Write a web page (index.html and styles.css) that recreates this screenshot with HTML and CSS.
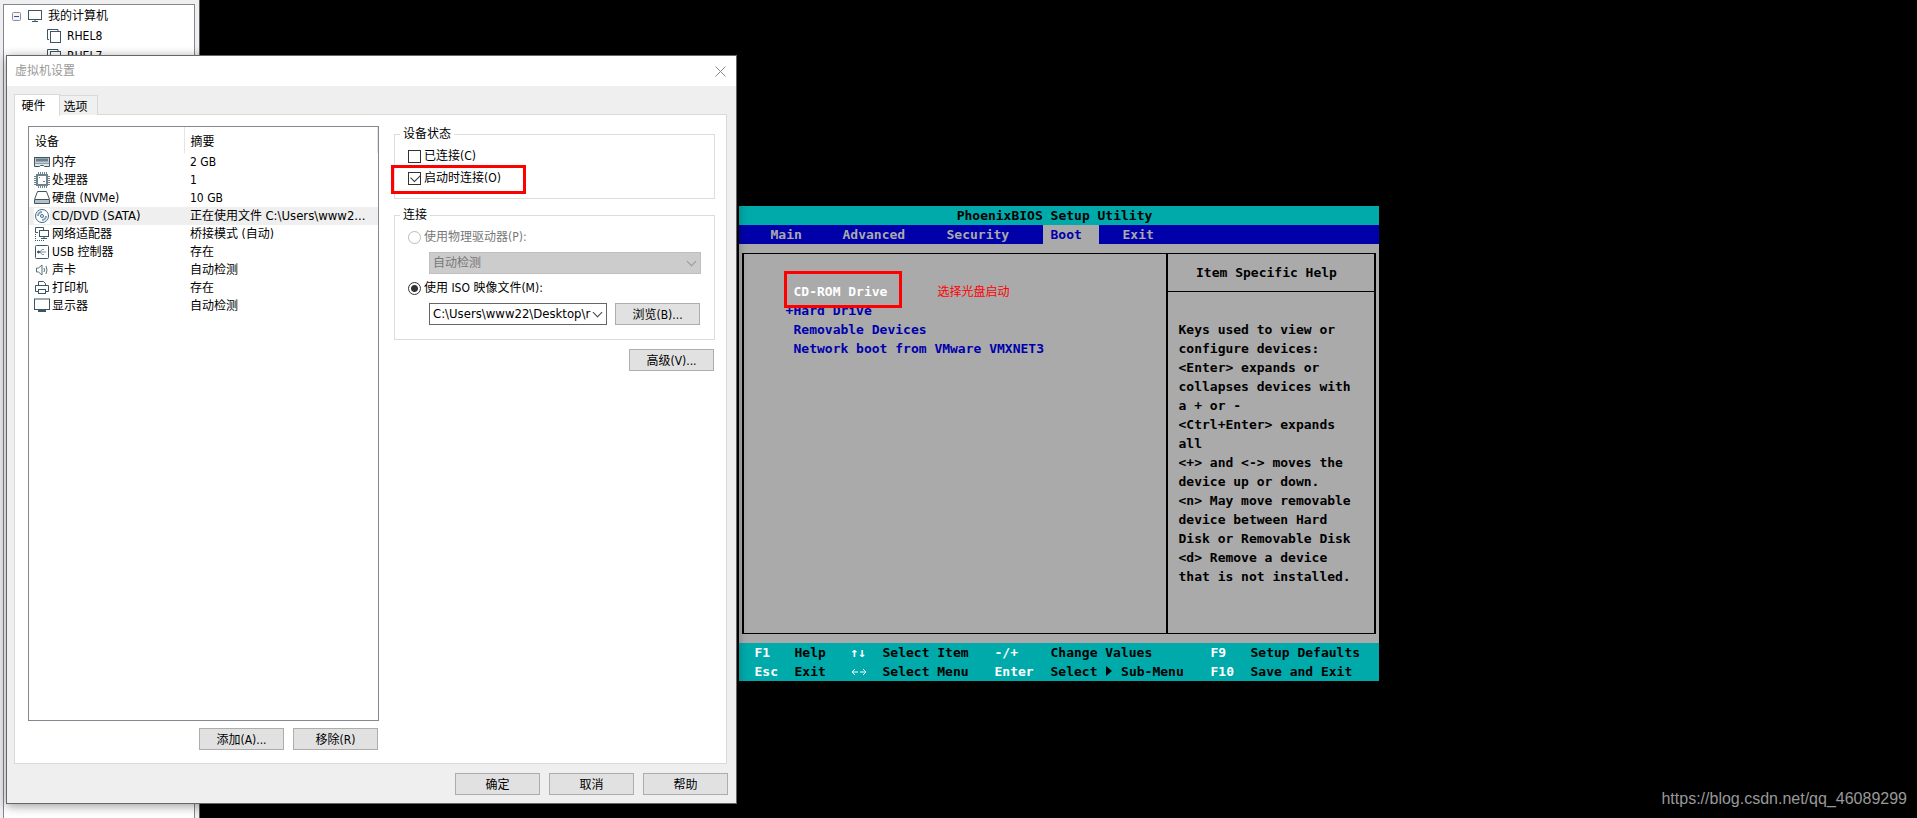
FILE: index.html
```html
<!DOCTYPE html>
<html lang="zh-CN">
<head>
<meta charset="utf-8">
<title>虚拟机设置</title>
<link rel="stylesheet" href="styles.css">
</head>
<body>
<div class="desktop">
  <aside class="library">
    <ul class="tree">
      <li class="tree-row">
        <svg class="tree-toggle" viewBox="0 0 9 9"><rect x=".5" y=".5" width="8" height="8" rx="1" fill="#f4f4f4" stroke="#8f8f8f"/><path d="M2 4.500h5" stroke="#2c50b0"/></svg>
        <svg class="tree-icon" viewBox="0 0 14 14" fill="none" stroke="#3d5663"><rect x=".5" y="1.500" width="13" height="9"/><path d="M7 11v2M4 12.500h6"/></svg>
        <span>我的计算机</span>
      </li>
      <li class="tree-row tree-child">
        <svg class="tree-icon" viewBox="0 0 14 14" fill="none" stroke="#3d5663"><path d="M11 2V.5H.5V10.500H2"/><rect x="3.500" y="2.500" width="10" height="11"/></svg>
        <span>RHEL8</span>
      </li>
      <li class="tree-row tree-child">
        <svg class="tree-icon" viewBox="0 0 14 14" fill="none" stroke="#3d5663"><path d="M11 2V.5H.5V10.500H2"/><rect x="3.500" y="2.500" width="10" height="11"/></svg>
        <span>RHEL7</span>
      </li>
    </ul>
  </aside>

  <main class="screen">
    <section class="bios">
      <h1 class="bios-title">PhoenixBIOS Setup Utility</h1>
      <nav class="bios-menu">
        <span class="m-main">Main</span><span class="m-adv">Advanced</span><span class="m-sec">Security</span><span class="m-boot">Boot</span><span class="m-exit">Exit</span>
      </nav>
      <div class="bios-body">
        <div class="boot-list">
          <div class="boot-item selected">CD-ROM Drive</div>
          <div class="boot-item"><span class="plus">+</span>Hard Drive</div>
          <div class="boot-item">Removable Devices</div>
          <div class="boot-item">Network boot from VMware VMXNET3</div>
          <div class="mark mark-boot"></div>
          <div class="note">选择光盘启动</div>
        </div>
        <div class="help">
          <h2 class="help-title">Item Specific Help</h2>
          <p class="help-text">Keys used to view or
configure devices:
&lt;Enter&gt; expands or
collapses devices with
a + or -
&lt;Ctrl+Enter&gt; expands
all
&lt;+&gt; and &lt;-&gt; moves the
device up or down.
&lt;n&gt; May move removable
device between Hard
Disk or Removable Disk
&lt;d&gt; Remove a device
that is not installed.</p>
        </div>
      </div>
      <div class="bios-keys">
        <b>F1</b><span>Help</span><b>↑↓</b><span>Select Item</span><b>-/+</b><span>Change Values</span><b>F9</b><span>Setup Defaults</span>
        <b>Esc</b><span>Exit</span><b><svg class="swap" viewBox="0 0 16 8" fill="none" stroke="#fff"><path d="M1 4h6M9 4h6M4 1L1 4l3 3M12 1l3 3-3 3"/></svg></b><span>Select Menu</span><b>Enter</b><span>Select <svg class="arrow" viewBox="0 0 8 10"><path d="M1 0l6 5-6 5z"/></svg> Sub-Menu</span><b>F10</b><span>Save and Exit</span>
      </div>
    </section>
    <a class="watermark" href="#">https://blog.csdn.net/qq_46089299</a>
  </main>

  <section class="dialog" role="dialog" aria-labelledby="dlg-title">
    <header class="titlebar">
      <h2 class="title" id="dlg-title">虚拟机设置</h2>
      <button class="close" type="button" aria-label="关闭"><svg viewBox="0 0 11 11"><path d="M.5 .5l10 10M10.500 .5l-10 10" stroke="#8a8a8a" fill="none"/></svg></button>
    </header>
    <div class="tabs" role="tablist">
      <button class="tab active" type="button" role="tab">硬件</button>
      <button class="tab" type="button" role="tab">选项</button>
    </div>
    <div class="panel">
      <div class="devices">
        <div class="listbox">
          <table class="list">
            <thead><tr><th class="c-dev">设备</th><th>摘要</th></tr></thead>
            <tbody>
              <tr><td><span class="dev"><svg viewBox="0 0 16 16"><rect x=".5" y="3.500" width="15" height="6" fill="#c3cdd2" stroke="#3d5663"/><path d="M2 6h12" stroke="#6b808b" stroke-width="3"/><path d="M.5 9.500v3h5l1-1h3l1 1h5v-3" fill="#dfe5e8" stroke="#3d5663"/></svg>内存</span></td><td>2 GB</td></tr>
              <tr><td><span class="dev"><svg viewBox="0 0 16 16" fill="none" stroke="#6f828c"><path d="M4.500 0v2M6.500 0v2M8.500 0v2M10.500 0v2M12.500 0v2M4.500 14v2M6.500 14v2M8.500 14v2M10.500 14v2M12.500 14v2M0 4.500h2M0 6.500h2M0 8.500h2M0 10.500h2M0 12.500h2M14 4.500h2M14 6.500h2M14 8.500h2M14 10.500h2M14 12.500h2"/><rect x="3" y="3" width="10" height="10" stroke-width="2"/><path d="M5 5.500h1M9 9.500h2"/></svg>处理器</span></td><td>1</td></tr>
              <tr><td><span class="dev"><svg viewBox="0 0 16 16" fill="none" stroke="#3d5663"><rect x="1" y="9" width="14" height="4" fill="#b5c0c6" stroke="none"/><path d="M3.500 1.500h9l3 8v4H.5v-4zM1 9.500h14"/></svg>硬盘 (NVMe)</span></td><td>10 GB</td></tr>
              <tr class="current"><td><span class="dev"><svg viewBox="0 0 16 16" fill="none" stroke="#3f6788"><rect width="16" height="16" fill="#fff" stroke="none"/><circle cx="8" cy="8" r="6.500"/><circle cx="8" cy="8" r="1.500"/><path d="M4 8a4 4 0 0 1 4-4M12 8a4 4 0 0 1-4 4" stroke="#7fa3bf" stroke-width="2"/></svg><span class="latin">CD/DVD (SATA)</span></span></td><td>正在使用文件 <span class="latin">C:\Users\www2...</span></td></tr>
              <tr><td><span class="dev"><svg viewBox="0 0 16 16" fill="none" stroke="#3d5663"><path d="M4 6.500H1.500v-5h8V4"/><rect x="5.500" y="4.500" width="9" height="6"/><path d="M10 11v2M7 12.500h6"/><path d="M1.500 8v6M1 14.500h9" stroke-dasharray="1 1"/></svg>网络适配器</span></td><td>桥接模式 (自动)</td></tr>
              <tr><td><span class="dev"><svg viewBox="0 0 16 16" fill="none" stroke="#3d5663"><rect x="1.500" y="1.500" width="13" height="13" rx="1"/><path d="M4 8h8M6 8l2-2.500h2M6 8l2 2.500h2" stroke="#7d8f99"/><circle cx="4.500" cy="8" r="1" fill="#3d5663"/></svg>USB 控制器</span></td><td>存在</td></tr>
              <tr><td><span class="dev"><svg viewBox="0 0 16 16" fill="none" stroke="#5a707c"><path d="M2.500 6v4h2l3.500 3v-10L4.500 6z"/><path d="M10 6q1 2 0 4M12 4q2 4 0 8"/></svg>声卡</span></td><td>自动检测</td></tr>
              <tr><td><span class="dev"><svg viewBox="0 0 16 16" fill="none" stroke="#3d5663"><path d="M4.500 5.500v-4h5l2 2v2M4 11.500H1.500v-6h13v6H12"/><rect x="4.500" y="9.500" width="7" height="4"/></svg>打印机</span></td><td>存在</td></tr>
              <tr><td><span class="dev"><svg viewBox="0 0 16 16" fill="none" stroke="#3d5663"><rect x=".5" y="1" width="15" height="10.500"/><path d="M4 13h8" stroke-width="2"/></svg>显示器</span></td><td>自动检测</td></tr>
            </tbody>
          </table>
        </div>
        <div class="actions"><button class="btn" type="button">添加(A)...</button><button class="btn" type="button">移除(R)</button></div>
      </div>
      <form class="options">
        <fieldset class="group state">
          <legend>设备状态</legend>
          <label class="opt"><input type="checkbox"><span>已连接(C)</span></label>
          <label class="opt"><input type="checkbox" checked><span>启动时连接(O)</span></label>
          <div class="mark mark-connect"></div>
        </fieldset>
        <fieldset class="group link">
          <legend>连接</legend>
          <label class="opt off"><input type="radio" name="src" disabled><span>使用物理驱动器(P):</span></label>
          <div class="field disabled"><span class="combo-wrap"><select class="combo" disabled aria-label="物理驱动器"><option>自动检测</option></select></span></div>
          <label class="opt"><input type="radio" name="src" checked><span>使用 ISO 映像文件(M):</span></label>
          <div class="field file"><span class="combo-wrap"><select class="combo latin" aria-label="ISO 映像文件"><option>C:\Users\www22\Desktop\r</option></select></span><button class="btn" type="button">浏览(B)...</button></div>
        </fieldset>
        <button class="btn advanced" type="button">高级(V)...</button>
      </form>
    </div>
    <footer class="footer"><button class="btn" type="button">确定</button><button class="btn" type="button">取消</button><button class="btn" type="button">帮助</button></footer>
  </section>
</div>
</body>
</html>
```
FILE: styles.css
```css
* { box-sizing: border-box; }
body { margin: 0; background: #000; color: #000; font: 12px/18px "DejaVu Sans Condensed", "Noto Sans CJK SC", sans-serif; }
button, select, input { font: inherit; color: inherit; margin: 0; }
h1, h2, p, ul { margin: 0; padding: 0; font-size: inherit; font-weight: inherit; }

.desktop { position: relative; display: flex; min-height: 100vh; overflow: hidden; }

/* Library tree */
.library { display: flex; flex: 0 0 200px; padding: 4px 4px 0 3px; background: #efefef; border-right: 1px solid #555; }
.tree { flex: 1; padding-top: 1px; list-style: none; background: #fff; border: 1px solid #828790; border-bottom: 0; }
.tree-row { display: flex; align-items: center; height: 20px; padding-left: 8px; }
.tree-child { padding-left: 43px; }
.tree-toggle { width: 9px; height: 9px; margin-right: 7px; }
.tree-icon { width: 14px; height: 14px; margin-right: 6px; }

/* Console */
.screen { position: relative; flex: 1; padding-top: 206px; background: #000; }
.bios { width: 640px; margin: 0 auto; background: #aaa; font: bold 13px/19px "DejaVu Sans Mono", monospace; }
.bios-title { text-align: center; padding-right: 8px; background: #0aa; }
.bios-menu { display: flex; height: 19px; padding-left: 32px; background: #00a; color: #aaa; }
.m-main { width: 72px; }
.m-adv { width: 104px; }
.m-sec { width: 96px; }
.m-boot { width: 56px; padding-left: 8px; background: #aaa; color: #00a; }
.m-exit { padding-left: 24px; }
.bios-body { display: grid; grid-template-columns: 426px 1fr; height: 399px; padding: 9px 3px; }
.boot-list { position: relative; padding: 28px 0 0 50px; border: solid #000; border-width: 1px 2px; color: #00a; }
.boot-item { position: relative; }
.selected { color: #fff; }
.plus { position: absolute; left: -8px; }
.mark { position: absolute; border: 3px solid #f00; }
.mark-boot { left: 40px; top: 17px; width: 118px; height: 37px; }
.note { position: absolute; left: 194px; top: 27px; color: #f00; font: 12px/19px "Noto Sans CJK SC", sans-serif; }
.help { border: solid #000; border-width: 1px 2px 1px 0; }
.help-title { height: 38px; padding-right: 8px; line-height: 38px; text-align: center; border-bottom: 1px solid #000; }
.help-text { padding: 28px 0 0 11px; white-space: pre; }
.bios-keys { display: grid; grid-template-columns: 40px 56px 32px 112px 56px 160px 40px 1fr; padding-left: 16px; background: #0aa; }
.bios-keys b { color: #fff; }
.arrow { width: 8px; height: 10px; }
.swap { width: 16px; height: 8px; }
.watermark { position: absolute; right: 10px; bottom: 9px; color: #999; font: 16px/20px "Liberation Sans", sans-serif; text-decoration: none; }

/* Settings dialog */
.dialog { position: absolute; left: 6px; top: 55px; width: 731px; background: #efefef; border: 1px solid #666; box-shadow: 0 2px 10px #0006; }
.titlebar { display: flex; justify-content: space-between; align-items: center; height: 30px; padding: 0 10px 0 8px; background: #fff; color: #999; }
.close { display: flex; padding: 0; border: 0; background: none; }
.close svg { width: 11px; height: 11px; }
.tabs { display: flex; align-items: flex-end; height: 29px; padding: 7px 0 0 7px; }
.tab { width: 38px; height: 20px; padding: 2px 6px 0 0; border: 1px solid #d9d9d9; border-width: 1px 1px 0 0; background: #f0f0f0; line-height: 18px; }
.tab.active { position: relative; width: 46px; height: 22px; margin-bottom: -1px; padding: 0 7px 0 0; border-left-width: 1px; background: #fff; }
.panel { display: flex; height: 650px; margin: -1px 9px 0 7px; padding: 11px 11px 0 13px; background: #fff; border: 1px solid #d9d9d9; }
.devices { flex: 0 0 351px; margin-right: 15px; }
.listbox { height: 595px; border: 1px solid #828790; }
.list { width: 100%; border-collapse: collapse; table-layout: fixed; }
.list th { height: 26px; padding: 3px 0 0 6px; text-align: left; font-weight: normal; border-right: 1px solid #e5e5e5; }
.list .c-dev { width: 155px; }
.list td { height: 18px; padding: 0 0 0 6px; line-height: 18px; white-space: nowrap; }
.list td:first-child { padding-left: 5px; }
.current { background: #efefef; }
.latin { font-size: 13px; }
.dev { display: flex; align-items: center; gap: 2px; }
.dev svg { width: 16px; height: 16px; }
.actions { display: flex; justify-content: flex-end; gap: 9px; padding: 7px 1px 0 0; }
.btn { width: 85px; height: 22px; padding: 2px 0 0; border: 1px solid #adadad; background: #e1e1e1; line-height: 18px; }

.options { flex: 1; display: flex; flex-direction: column; min-width: 0; }
.group { position: relative; min-width: 0; margin: 0; padding: 0 13px; border: 1px solid #dcdcdc; }
.group legend { height: 18px; padding: 0 3px; margin-left: -8px; }
.state { height: 74px; margin-top: -1px; padding-top: 2px; }
.link { height: 134px; margin-top: 7px; padding-top: 2px; }
.opt { display: flex; align-items: center; gap: 3px; height: 22px; }
.opt input { position: relative; appearance: none; width: 13px; height: 13px; border: 1px solid #333; background: #fff; }
.opt input[type=radio] { border-radius: 50%; }
.opt input[type=radio]:checked { background: radial-gradient(#333 0 3px, #fff 4px); }
.opt input[type=checkbox]:checked::after { content: ""; position: absolute; left: 2px; top: 1px; width: 8px; height: 5px; border: solid #333; border-width: 0 0 1px 1px; transform: rotate(-45deg); }
.off { color: #777; }
.opt.off input { border-color: #bbb; }
.field { display: flex; gap: 8px; padding-left: 21px; }
.field.disabled { margin: 4px 0 3px; }
.field.file { margin-top: 4px; }
.combo-wrap { position: relative; flex: 0 0 178px; }
.disabled .combo-wrap { flex-basis: 272px; }
.combo-wrap::after { content: ""; position: absolute; right: 6px; top: 6px; width: 6px; height: 6px; border: solid #444; border-width: 0 1px 1px 0; transform: rotate(45deg); pointer-events: none; }
.disabled .combo-wrap::after { border-color: #999; }
.combo { display: block; appearance: none; width: 100%; height: 22px; padding: 0 12px 0 3px; border: 1px solid #666; border-radius: 0; background: #fff; }
.combo.latin { font-size: 13px; }
.disabled .combo { border-color: #bfbfbf; background: #ccc; color: #777; opacity: 1; }
.advanced { align-self: flex-end; margin: 9px 1px 0 0; }
.footer { display: flex; justify-content: flex-end; gap: 9px; height: 39px; padding: 9px 8px 0 0; }
.mark-connect { left: -4px; top: 22px; width: 135px; height: 29px; }
```
